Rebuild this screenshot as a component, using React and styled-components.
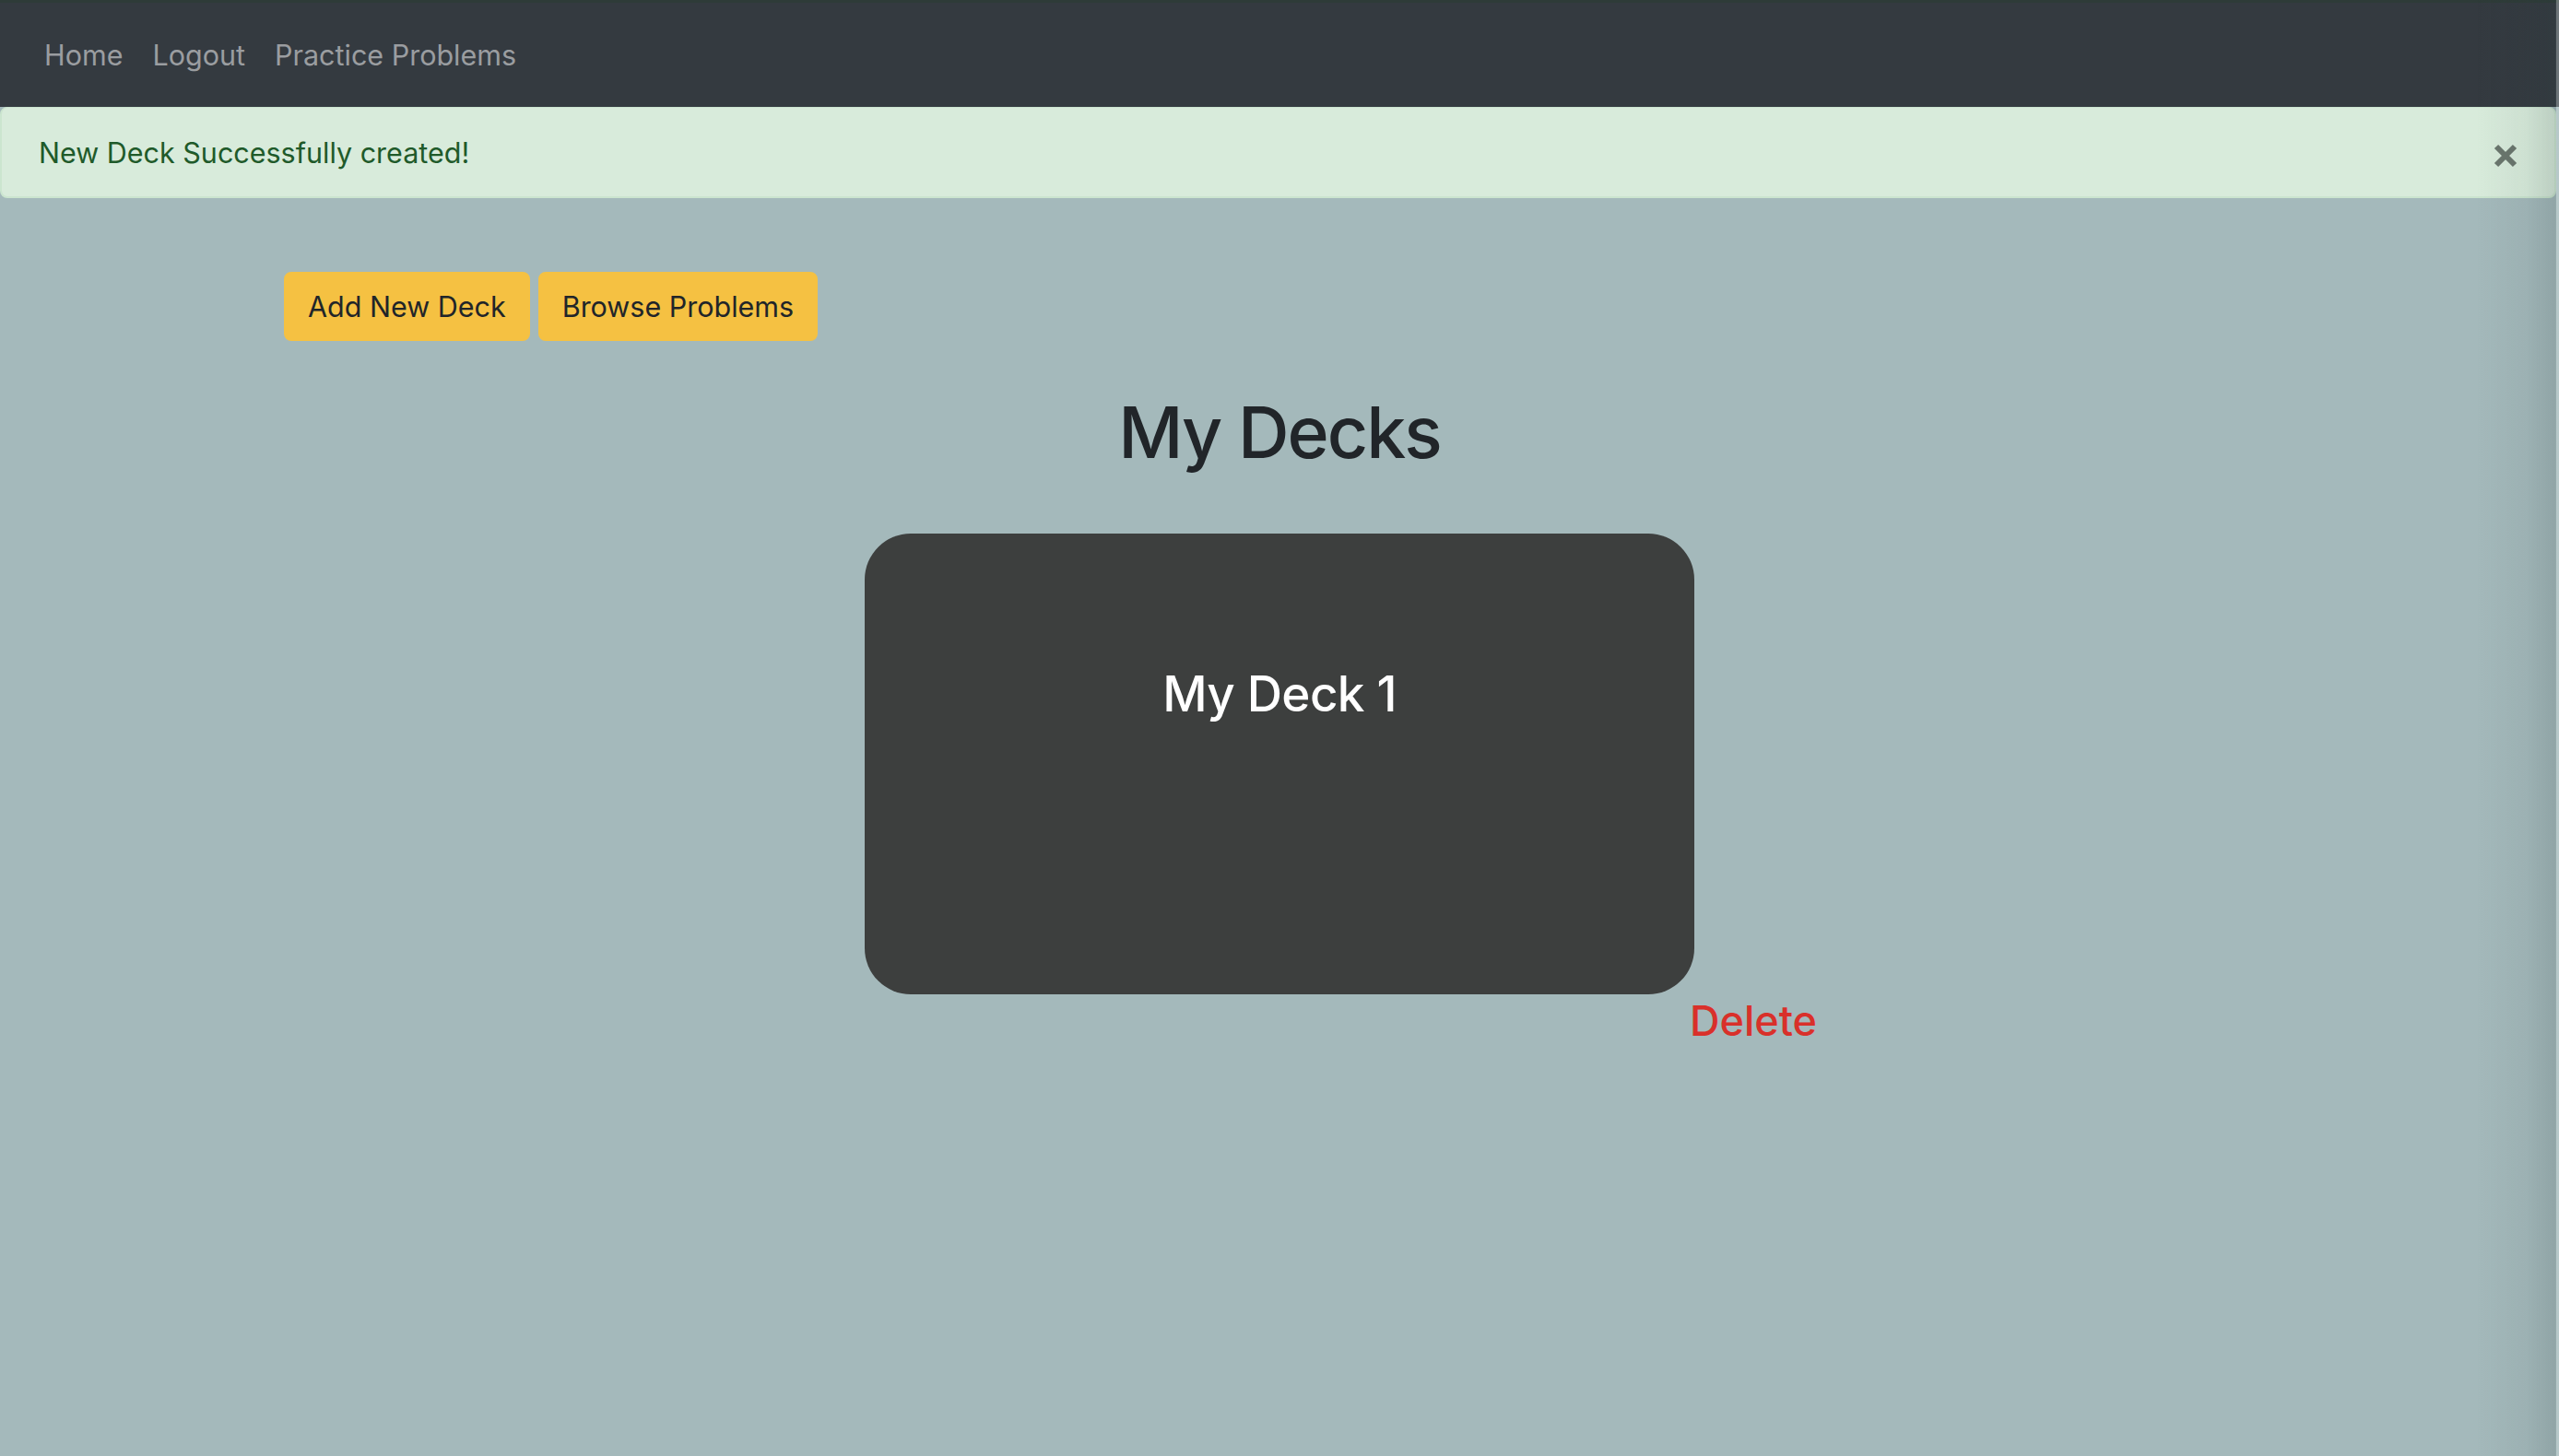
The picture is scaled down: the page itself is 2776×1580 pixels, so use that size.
import React from "react";
import styled, { createGlobalStyle } from "styled-components";

const GlobalStyle = createGlobalStyle`
  html, body {
    margin: 0;
    padding: 0;
  }
  body {
    background: #a4b9bb;
    font-family: Inter, "Open Sans", "Liberation Sans", sans-serif;
    color: #212529;
    min-height: 1580px;
    overflow: hidden;
  }
  body::after {
    content: "";
    position: fixed;
    top: 0;
    right: 0;
    bottom: 0;
    width: 90px;
    pointer-events: none;
    background: linear-gradient(
      to right,
      rgba(40, 60, 60, 0) 0%,
      rgba(40, 60, 60, 0.06) 60%,
      rgba(40, 60, 60, 0.16) 96%,
      rgba(220, 230, 230, 0.35) 97%,
      rgba(220, 230, 230, 0.35) 100%
    );
  }
`;

const Page = styled.div`
  min-height: 1580px;
  display: flex;
  flex-direction: column;
`;

const Navbar = styled.nav`
  display: flex;
  align-items: center;
  height: 113px;
  padding: 0 32px;
  background: #343a40;
  border-top: 3px solid #2e3b38;
`;

const NavLink = styled.a`
  padding: 0 16px;
  font-size: 30.5px;
  line-height: 48px;
  color: #9a9da0;
  text-decoration: none;
  cursor: pointer;
`;

const Alert = styled.div`
  display: flex;
  align-items: center;
  justify-content: space-between;
  padding: 25px 40px 23px 40px;
  margin-right: 3px;
  background: #d8ebdb;
  border: 2px solid #cbe5cf;
  border-top-width: 1px;
  border-radius: 8px;
  color: #1f5a2a;
  font-size: 30.5px;
  line-height: 48px;
`;

const CloseButton = styled.button`
  border: 0;
  background: transparent;
  padding: 0;
  margin-right: 0;
  margin-top: 6px;
  display: flex;
  align-items: center;
  cursor: pointer;
  svg {
    display: block;
  }
`;

const Toolbar = styled.div`
  display: flex;
  gap: 9px;
  padding-left: 308px;
  margin-top: 80px;
`;

const Button = styled.button`
  padding: 12px 24px;
  border: 2px solid #f5c142;
  border-radius: 8px;
  background: #f5c142;
  color: #212529;
  font-family: inherit;
  font-size: 30.5px;
  line-height: 47px;
  cursor: pointer;
`;

const Heading = styled.h1`
  margin: 52px 0 0;
  font-size: 77px;
  font-weight: 500;
  line-height: 94px;
  text-align: center;
  color: #212529;
  letter-spacing: -2px;
`;

const DeckList = styled.div`
  width: 900px;
  margin: 63px auto 0;
`;

const DeckCard = styled.div`
  height: 500px;
  box-sizing: border-box;
  padding-top: 141px;
  border-radius: 50px;
  background: #3d3f3e;
  text-align: center;
`;

const DeckTitle = styled.h3`
  margin: 0;
  font-size: 53px;
  font-weight: 500;
  line-height: 66px;
  color: #ffffff;
  letter-spacing: -0.6px;
`;

const DeleteLink = styled.a`
  display: block;
  margin-left: 895px;
  white-space: nowrap;
  font-size: 45px;
  font-weight: 500;
  line-height: 58px;
  color: #d9302a;
  text-decoration: none;
  cursor: pointer;
`;

const decks = [{ id: 1, name: "My Deck 1" }];

const App = () => {
  return (
    <Page>
      <GlobalStyle />
      <Navbar>
        <NavLink>Home</NavLink>
        <NavLink>Logout</NavLink>
        <NavLink>Practice Problems</NavLink>
      </Navbar>
      <Alert>
        <span>New Deck Successfully created!</span>
        <CloseButton aria-label="Close">
          <svg width="26" height="26" viewBox="0 0 26 26">
            <path
              d="M3 3 L23 23 M23 3 L3 23"
              stroke="#6a766d"
              strokeWidth="6"
              strokeLinecap="butt"
            />
          </svg>
        </CloseButton>
      </Alert>
      <Toolbar>
        <Button>Add New Deck</Button>
        <Button>Browse Problems</Button>
      </Toolbar>
      <Heading>My Decks</Heading>
      {decks.map((deck) => (
        <DeckList key={deck.id}>
          <DeckCard>
            <DeckTitle>{deck.name}</DeckTitle>
          </DeckCard>
          <DeleteLink>Delete</DeleteLink>
        </DeckList>
      ))}
    </Page>
  );
};

export default App;
